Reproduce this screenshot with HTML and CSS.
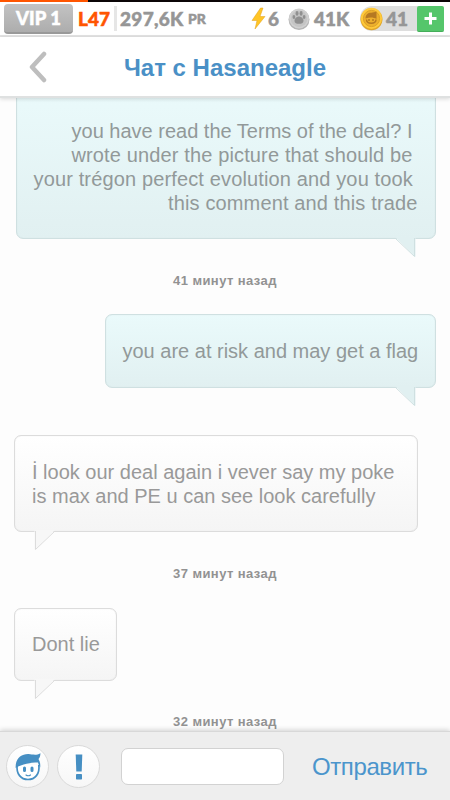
FILE: index.html
```html
<!DOCTYPE html>
<html lang="ru">
<head>
<meta charset="utf-8">
<title>Чат с Hasaneagle</title>
<link rel="stylesheet" href="styles.css">
</head>
<body>
<div class="app">
  <div class="progress"><div class="progress-fill"></div></div>
  <div class="status">
    <div class="vip"><span>VIP 1</span></div>
    <span class="level">L47</span>
    <span class="divider"></span>
    <span class="power">297,6K</span><span class="unit">PR</span>
    <svg class="bolt" width="15" height="23" viewBox="0 0 15 23"><path d="M9.500 1 1 13.500h5L4 22 14 9.500H9L12 1Z" fill="#ffc526" stroke="#e0a01c" stroke-width=".5"/></svg>
    <span class="energy">6</span>
    <svg class="paw" width="22" height="22" viewBox="0 0 22 22"><circle cx="11" cy="11.5" r="10.5" fill="#b5b5b5"/><circle cx="11" cy="10.5" r="10" fill="#d0d0d0"/><circle cx="11" cy="10.7" r="8.3" fill="#c5c5c5"/><g fill="#909090"><ellipse cx="5.9" cy="9" rx="1.4" ry="2"/><ellipse cx="9" cy="5.4" rx="1.5" ry="2.3"/><ellipse cx="13.1" cy="5.4" rx="1.5" ry="2.3"/><ellipse cx="16.1" cy="9" rx="1.4" ry="2"/><path d="M11 8.6c2.6 0 4.500 2.300 4.500 4.300 0 2-2 2.800-4.500 2.800s-4.500-.8-4.500-2.800c0-2 1.900-4.300 4.500-4.300Z"/></g></svg>
    <span class="coins">41K</span>
    <div class="gold">
      <svg width="23" height="24" viewBox="0 0 23 24"><circle cx="11.5" cy="12.3" r="11" fill="#dfa52b"/><circle cx="11.5" cy="11.3" r="10.6" fill="#ffc93a"/><circle cx="11.5" cy="11.5" r="8.1" fill="#edb02d" stroke="#dca129"/><path d="M5.500 11.500c0-4 2.500-5.800 5.500-5.800 2 0 3.500-.5 5.500-1.200v7.500c-3-1.700-6.500-2-11-.5Z" fill="#b57922"/><path d="M6.500 12.500c0 5 9.500 5 9.500 0" fill="none" stroke="#b57922" stroke-width="1.400"/><path d="M9 12v2m4-2v2" stroke="#b57922" stroke-width="1.500"/></svg>
      <span class="gold-count">41</span>
      <div class="plus"><svg width="13" height="13" viewBox="0 0 13 13"><path d="M6.500 .5v12M.5 6.500h12" stroke="#fff" stroke-width="3"/></svg></div>
    </div>
  </div>
  <header class="titlebar">
    <svg class="back" width="19" height="32" viewBox="0 0 19 32"><path d="M16 3 4 16l12 13" fill="none" stroke="#bebebe" stroke-width="4.500" stroke-linecap="round" stroke-linejoin="round"/></svg>
    <h1><span>Чат с Hasaneagle</span></h1>
  </header>
  <main class="chat">
    <div class="bubble mine first">
      <p class="shifted">you have read the Terms of the deal? I</p>
      <p class="shifted wide">wrote under the picture that should be</p>
      <p class="shifted wide">your trégon perfect evolution and you took</p>
      <p class="wide">this comment and this trade</p>
      <svg class="tail" width="21" height="21" viewBox="0 0 21 21"><path d="M0 0h20.500v20Z" fill="#e1f0f1"/><path d="M0 1 19.500 19.500V1" fill="none" stroke="#cfe0e1"/></svg>
    </div>
    <time>41 минут назад</time>
    <div class="bubble mine second">
      <p>you are at risk and may get a flag</p>
      <svg class="tail" width="21" height="21" viewBox="0 0 21 21"><path d="M0 0h20.500v20Z" fill="#e1f0f1"/><path d="M0 1 19.500 19.500V1" fill="none" stroke="#cfe0e1"/></svg>
    </div>
    <div class="bubble theirs third">
      <p>İ look our deal again i vever say my poke</p>
      <p>is max and PE u can see look carefully</p>
      <svg class="tail" width="21" height="21" viewBox="0 0 21 21"><path d="M.5 0H21L.5 20Z" fill="#f7f7f7"/><path d="M21 1 1.500 19.500V1" fill="none" stroke="#dcdcdc"/></svg>
    </div>
    <time class="tall">37 минут назад</time>
    <div class="bubble theirs fourth">
      <p>Dont lie</p>
      <svg class="tail" width="21" height="21" viewBox="0 0 21 21"><path d="M.5 0H21L.5 20Z" fill="#f7f7f7"/><path d="M21 1 1.500 19.500V1" fill="none" stroke="#dcdcdc"/></svg>
    </div>
    <time>32 минут назад</time>
  </main>
  <footer class="composer">
    <div class="round">
      <svg width="26" height="28" viewBox="0 0 26 28"><path d="M2.200 12C1 21 6 26.500 13 26.500S25 21 23.800 12" fill="#fff" stroke="#468fc3" stroke-width="1.700"/><path d="M.7 15C0 6 6 .8 13.500 1c4 .1 7 2 12-.8-.2 3-.8 4.300-2 5.800 1.500 2.500 2 5 1.700 8.500-1-1.500-1.700-3-2.200-5C16 9.500 7 11 .7 15Z" fill="#468fc3"/><path d="M9.500 15v2.500m7.500-2.500v2.500" stroke="#468fc3" stroke-width="3" stroke-linecap="round"/><path d="M11 22q2.200 1.500 4.500 0" fill="none" stroke="#468fc3" stroke-width="1.200" stroke-linecap="round"/></svg>
    </div>
    <div class="round">
      <svg width="8" height="26" viewBox="0 0 8 26"><path d="M.7.500h6.600L6.700 17.500H1.300Z" fill="#468fc3"/><rect x="1" y="20" width="6" height="5.500" rx=".7" fill="#468fc3"/></svg>
    </div>
    <div class="field"></div>
    <span class="send">Отправить</span>
  </footer>
</div>
</body>
</html>
```
FILE: styles.css
```css
* { box-sizing: border-box; }
body { margin: 0; font-family: "Liberation Sans", Arial, sans-serif; background: #fff; }
svg { display: block; flex: none; }
h1, p { margin: 0; }
.app { width: 450px; height: 800px; display: flex; flex-direction: column; overflow: hidden; background: #fdfdfd; }
.progress { height: 2px; background: #0b0507; flex: none; }
.progress-fill { width: 88px; height: 2px; background: #ff5500; }
.status { height: 35px; flex: none; display: flex; align-items: center; padding-left: 4px; background: #fff; border-bottom: 2px solid #e3e3e3; font-family: Lato, sans-serif; font-weight: 900; font-size: 19px; line-height: 30px; color: #969696; white-space: nowrap; -webkit-text-stroke: .5px currentColor; }
.vip { width: 69px; height: 30px; border-radius: 4px; background: linear-gradient(#c3c3c3, #adadad); border-bottom: 2px solid #999; color: #fff; font-size: 18.500px; text-align: center; line-height: 29px; }
.level { color: #ff5500; margin-left: 5px; width: 32px; }
.divider { width: 3px; height: 25px; background: #e6e6e6; margin-left: 4px; margin-right: 3px; }
.power { width: 66px; letter-spacing: .3px; }
.unit { font-size: 14px; margin-left: 2px; width: 18px; }
.bolt { margin-left: 45px; }
.energy { width: 12px; margin-left: 2px; }
.paw { margin-left: 8px; }
.coins { width: 36px; margin-left: 4px; }
.gold { display: flex; align-items: center; margin-left: 10px; width: 84px; height: 25px; border-radius: 12px 3px 3px 12px; background: #dedede; }
.gold-count { width: 24px; margin-left: 3px; flex: none; }
.plus { width: 27px; height: 26px; margin-left: auto; border-radius: 2px; background: #55c66b; border-bottom: 1px solid #45ad5a; display: grid; place-items: center; flex: none; }
.titlebar { height: 61px; flex: none; display: flex; align-items: center; position: relative; z-index: 2; background: #fff; border-bottom: 2px solid #dfe1e1; box-shadow: 0 1px 4px rgba(0,0,0,.15); }
.back { margin-left: 28px; }
h1 { flex: 1; margin: 2px 47px 0 0; text-align: center; font-size: 24px; color: #4a90c6; white-space: nowrap; line-height: 30px; }
.chat { flex: 1; min-height: 0; margin-top: -8px; display: flex; flex-direction: column; overflow: hidden; }
.bubble { position: relative; flex: none; border: 1px solid; border-radius: 7px; padding: 24px 17px; font-size: 20px; line-height: 24px; color: #999; white-space: nowrap; }
.mine { align-self: flex-end; margin-right: 14.500px; text-align: right; color: #929999; background: linear-gradient(#eafafb, #e1f0f1); border-color: #cfe0e1; box-shadow: inset 0 0 1px #cfe0e1; }
.theirs { align-self: flex-start; margin-left: 14px; background: linear-gradient(#fff, #f5f5f5); border-color: #dcdcdc; box-shadow: inset 0 0 1px #dcdcdc; }
.first { width: 420px; height: 149px; padding-top: 28px; }
.shifted { margin-right: 5px; }
.wide { letter-spacing: .14px; }
.second { width: 331px; height: 74px; }
.third { width: 404px; height: 97px; margin-top: 47px; }
.fourth { width: 103px; height: 73px; padding-top: 23px; }
.tail { position: absolute; top: calc(100% - 1px); }
.mine .tail { right: 19px; }
.theirs .tail { left: 19px; }
time { flex: none; width: 100%; height: 75px; padding-top: 34px; text-align: center; font-size: 13px; letter-spacing: .42px; line-height: 16px; font-weight: bold; color: #929292; }
.tall { height: 76px; }
.fourth + time { height: 50px; padding-top: 33px; }
.composer { height: 69px; flex: none; position: relative; z-index: 2; display: flex; align-items: center; padding: 1px 0 0 6px; background: #eee; border-top: 1px solid #d8d8d8; box-shadow: 0 -1px 5px rgba(0,0,0,.18); }
.round { width: 43px; height: 43px; margin-right: 8px; border: 1px solid #dadada; border-radius: 50%; background: linear-gradient(#fff, #f7f7f7); display: grid; place-items: center; flex: none; }
.field { width: 163px; height: 37px; margin-left: 13px; border: 1px solid #d2d2d2; border-radius: 7px; background: #fff; flex: none; }
.send { margin-left: 28px; font-size: 24px; letter-spacing: -.4px; color: #4b95cc; }
```
